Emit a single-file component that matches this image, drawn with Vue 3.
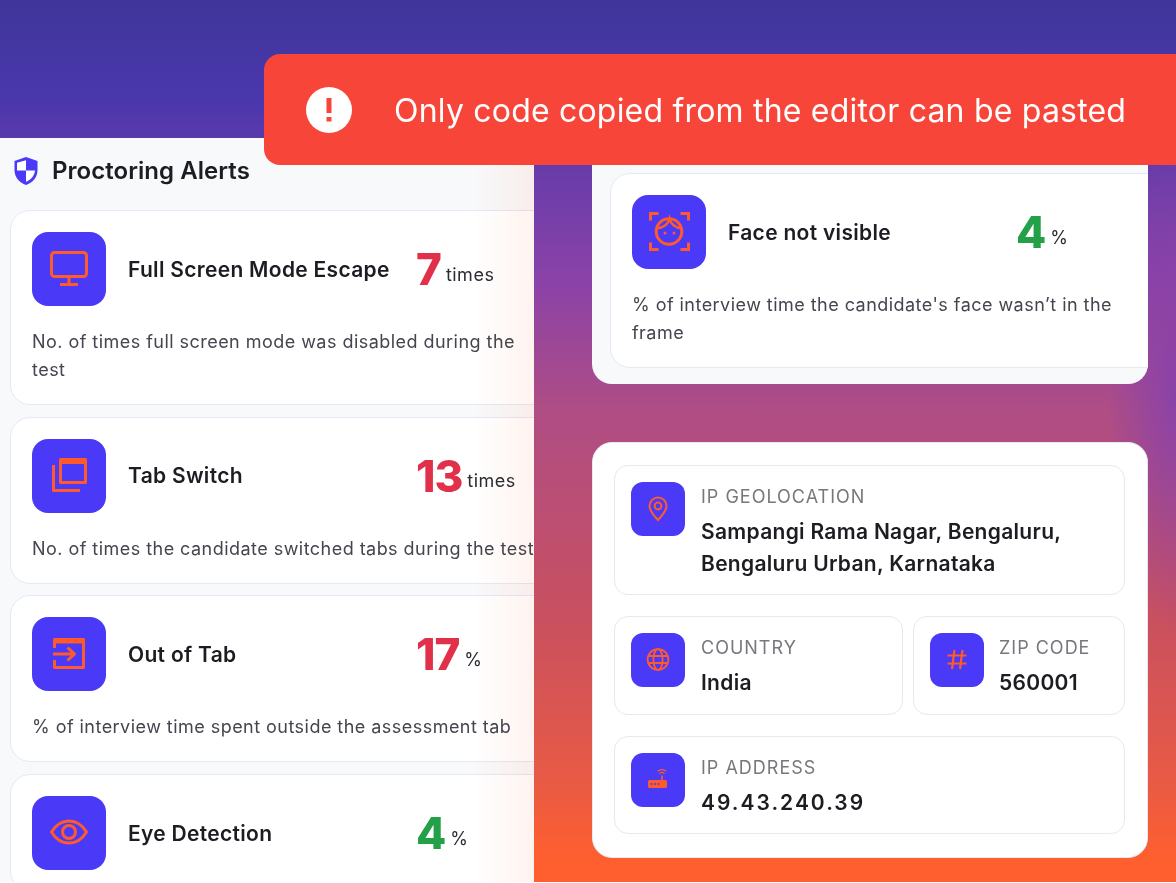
<template>
  <div class="screen">
    <div class="left-panel">
      <div class="panel-head">
        <svg class="shield" width="26" height="30" viewBox="0 0 26 30">
          <path d="M13 1 L24.5 5 V14 C24.5 21.5 19.5 26.5 13 29 C6.5 26.5 1.5 21.5 1.5 14 V5 Z" fill="#4a3af8" />
          <path d="M13 4.2 V14.5 H4 V6.8 Z" fill="#fff" />
          <path d="M13 14.5 H22 C21.4 20 17.8 23.6 13 25.8 Z" fill="#fff" />
        </svg>
        <h2>Proctoring Alerts</h2>
      </div>

      <div class="alert-list">
        <div class="alert-card" v-for="alert in alerts" :key="alert.title">
          <div class="alert-top">
            <div class="icon-box">
              <svg width="74" height="74" viewBox="0 0 74 74" fill="none" stroke="#ff5a2c" stroke-width="3" stroke-linejoin="round" v-html="alert.icon"></svg>
            </div>
            <div class="alert-title">{{ alert.title }}</div>
            <div class="metric">
              <span class="num" :class="alert.tone">{{ alert.value }}</span>
              <span class="unit">{{ alert.unit }}</span>
            </div>
          </div>
          <p class="alert-desc" v-if="alert.desc">{{ alert.desc }}</p>
        </div>
      </div>

      <div class="edge-fade"></div>
    </div>

    <div class="right-col">
      <div class="face-panel">
        <div class="alert-card">
          <div class="alert-top">
            <div class="icon-box">
              <svg width="74" height="74" viewBox="0 0 74 74" fill="none" stroke="#ff5a2c" stroke-width="3" v-html="faceIcon"></svg>
            </div>
            <div class="alert-title">Face not visible</div>
            <div class="metric">
              <span class="num good">4</span>
              <span class="unit">%</span>
            </div>
          </div>
          <p class="alert-desc">% of interview time the candidate's face wasn’t in the frame</p>
        </div>
      </div>

      <div class="info-panel">
        <div class="info-cell">
          <div class="info-icon">
            <svg width="54" height="54" viewBox="0 0 54 54" fill="none" stroke="#ff5a2c" stroke-width="2">
              <path d="M27 38 C24 34.5 18.5 29.5 18.5 24 A8.5 8.5 0 0 1 35.5 24 C35.5 29.5 30 34.5 27 38 Z" />
              <circle cx="27" cy="24" r="3.4" />
            </svg>
          </div>
          <div>
            <div class="info-label">IP Geolocation</div>
            <div class="info-value">Sampangi Rama Nagar, Bengaluru, Bengaluru Urban, Karnataka</div>
          </div>
        </div>

        <div class="info-row">
          <div class="info-cell grow">
            <div class="info-icon">
              <svg width="54" height="54" viewBox="0 0 54 54" fill="none" stroke="#ff5a2c" stroke-width="1.8">
                <circle cx="27" cy="26.5" r="10.4" />
                <ellipse cx="27" cy="26.5" rx="4.6" ry="10.4" />
                <path d="M17.6 23 H36.4 M17.6 30 H36.4" />
              </svg>
            </div>
            <div>
              <div class="info-label">Country</div>
              <div class="info-value">India</div>
            </div>
          </div>
          <div class="info-cell zip">
            <div class="info-icon">
              <svg width="54" height="54" viewBox="0 0 54 54" fill="none" stroke="#ff5a2c" stroke-width="2.2">
                <path d="M24.5 17 L22 36 M32.5 17 L30 36 M17.5 22.5 H36.5 M17.5 30.5 H36.5" />
              </svg>
            </div>
            <div>
              <div class="info-label">Zip Code</div>
              <div class="info-value">560001</div>
            </div>
          </div>
        </div>

        <div class="info-cell">
          <div class="info-icon">
            <svg width="54" height="54" viewBox="0 0 54 54" fill="none" stroke="#ff5a2c" stroke-width="1.3">
              <rect x="17" y="27" width="19" height="8" rx="1.6" fill="#ff5a2c" stroke="none" />
              <path d="M31 27 V22.5" stroke-width="1.6" />
              <path d="M28.5 20.6 A3.6 3.6 0 0 1 33.5 20.6 M26.6 18.4 A6.4 6.4 0 0 1 35.4 18.4" />
              <circle cx="20.5" cy="31" r="1" fill="#4a3af8" stroke="none" />
              <circle cx="24" cy="31" r="1" fill="#4a3af8" stroke="none" />
              <circle cx="27.5" cy="31" r="1" fill="#4a3af8" stroke="none" />
            </svg>
          </div>
          <div>
            <div class="info-label">IP Address</div>
            <div class="info-value ip">49.43.240.39</div>
          </div>
        </div>
      </div>
    </div>

    <div class="toast">
      <svg class="toast-icon" width="46" height="46" viewBox="0 0 46 46">
        <circle cx="23" cy="23" r="23" fill="#fff" />
        <rect x="20.5" y="11" width="5" height="15" fill="#f74539" />
        <rect x="20.5" y="30" width="5" height="4.5" fill="#f74539" />
      </svg>
      <span>Only code copied from the editor can be pasted</span>
    </div>
  </div>
</template>

<script setup>
const alerts = [
  {
    title: 'Full Screen Mode Escape',
    value: 7,
    unit: 'times',
    tone: 'bad',
    desc: 'No. of times full screen mode was disabled during the test',
    icon: '<rect x="19.5" y="20.5" width="35" height="24" rx="3"/><path d="M37 45 V52 M28 52.5 H46"/>'
  },
  {
    title: 'Tab Switch',
    value: 13,
    unit: 'times',
    tone: 'bad',
    desc: 'No. of times the candidate switched tabs during the test',
    icon: '<path d="M28.5 24 V20.5 H53.5 V43.5 H28.5 Z"/><path d="M28 22.5 H54" stroke-width="5"/><path d="M21.5 26 V51.5 H48"/>'
  },
  {
    title: 'Out of Tab',
    value: 17,
    unit: '%',
    tone: 'bad',
    desc: '% of interview time spent outside the assessment tab',
    icon: '<path d="M22.5 31 V22.5 H51.5 V50.5 H22.5 V43"/><path d="M22 24 H52" stroke-width="5"/><path d="M21 37 H42 M35.5 30.5 L42.5 37 L35.5 43.5"/>'
  },
  {
    title: 'Eye Detection',
    value: 4,
    unit: '%',
    tone: 'good',
    desc: '',
    icon: '<path d="M19.5 36 C24 28.5 30 25 37 25 C44 25 50 28.5 54.5 36 C50 43.5 44 47 37 47 C30 47 24 43.5 19.5 36 Z"/><circle cx="37" cy="36" r="6.5"/>'
  }
]

const faceIcon = `<path d="M18.5 25.5 V18.5 H26.5 M48.5 18.5 H56.5 V25.5 M18.5 47.5 V54.5 H26.5 M48.5 54.5 H56.5 V47.5"/>
  <circle cx="37" cy="36.5" r="12.8"/>
  <path d="M25.5 33 C31 33 36 29.5 37.5 24 C39 29.5 44 33 49 33" stroke-width="2.6"/>
  <circle cx="33" cy="38" r="1.5" fill="#ff5a2c" stroke="none"/>
  <circle cx="42" cy="38" r="1.5" fill="#ff5a2c" stroke="none"/>`
</script>

<style>
html,
body {
  margin: 0;
  background: #fff;
}
</style>

<style scoped>
.screen {
  position: relative;
  width: 1176px;
  height: 882px;
  overflow: hidden;
  display: flex;
  font-family: Inter, "Noto Sans", sans-serif;
  color: #1c1d22;
  background:
    radial-gradient(ellipse 70px 240px at 100% 390px, #8a42a8 0%, rgba(138, 66, 168, 0) 100%),
    linear-gradient(180deg, #3f369a 0, #4a37ad 100px, #6c3da9 180px, #8a42a8 280px, #af4d85 410px, #c9505f 620px, #e85a45 780px, #ff5f2e 860px);
}

.left-panel {
  position: relative;
  box-sizing: border-box;
  flex: none;
  width: 534px;
  margin-top: 138px;
  padding: 0 0 0 10px;
  background: #f8f9fb;
  overflow: hidden;
}

.panel-head {
  box-sizing: border-box;
  display: flex;
  align-items: center;
  gap: 13px;
  height: 72px;
  padding: 0 0 6px 3px;
}

.shield {
  flex: none;
}

.panel-head h2 {
  margin: 0;
  font-size: 24px;
  line-height: 32px;
  letter-spacing: 0.05px;
  font-weight: 600;
}

.alert-list {
  display: flex;
  flex-direction: column;
  gap: 11.7px;
  width: 558px;
}

.alert-card {
  box-sizing: border-box;
  width: 558px;
  padding: 21px 21px 20px;
  background: #fff;
  border: 1px solid #e4e9f3;
  border-radius: 20px;
}

.alert-top {
  display: flex;
  align-items: center;
}

.icon-box {
  flex: none;
  width: 74px;
  height: 74px;
  border-radius: 16px;
  background: #4a3af8;
}

.alert-title {
  flex: none;
  width: 288px;
  box-sizing: border-box;
  padding-left: 22px;
  font-size: 21px;
  letter-spacing: 0.3px;
  font-weight: 600;
}

.metric {
  display: flex;
  align-items: center;
  gap: 5px;
  margin-left: 22px;
}

.num {
  font-size: 44px;
  line-height: 44px;
  letter-spacing: -1px;
  font-weight: 800;
}

.bad {
  color: #e0304a;
}

.good {
  color: #24a148;
}

.unit {
  margin-top: 10px;
  font-size: 18px;
  letter-spacing: 0.5px;
  color: #2b2c33;
}

.alert-desc {
  margin: 22px 0 0;
  font-size: 18px;
  line-height: 28px;
  letter-spacing: 0.46px;
  color: #44454f;
}

.edge-fade {
  position: absolute;
  top: 0;
  right: 0;
  bottom: 0;
  width: 60px;
  background: linear-gradient(90deg, #fff, #fff3ef);
  mix-blend-mode: multiply;
  pointer-events: none;
}

.right-col {
  display: flex;
  flex-direction: column;
  gap: 58px;
  flex: none;
  width: 556px;
  margin-left: 58px;
}

.face-panel {
  box-sizing: border-box;
  height: 246px;
  margin-top: 138px;
  padding: 35px 0 0 18px;
  background: #f8f9fb;
  border-radius: 0 0 20px 20px;
  overflow: hidden;
}

.face-panel .alert-card {
  height: 195px;
}

.face-panel .alert-desc {
  width: 500px;
}

.info-panel {
  box-sizing: border-box;
  display: flex;
  flex-direction: column;
  gap: 21px;
  height: 416px;
  padding: 22px 22px 21px 21px;
  background: #fff;
  border: 1px solid #e4e9f3;
  border-radius: 20px;
}

.info-row {
  display: flex;
  gap: 10px;
}

.info-cell {
  box-sizing: border-box;
  display: flex;
  gap: 16px;
  padding: 16px 16px 14.5px;
  border: 1.5px solid #e4e9f3;
  border-radius: 14px;
}

.info-icon {
  flex: none;
  width: 54px;
  height: 54px;
  border-radius: 12px;
  background: #4a3af8;
}

.grow {
  flex: 1;
  height: 99px;
}

.zip {
  flex: none;
  width: 212px;
  height: 99px;
  gap: 15px;
}

.info-label {
  margin-top: 1px;
  font-size: 18px;
  line-height: 28px;
  letter-spacing: 1px;
  text-transform: uppercase;
  color: #77787e;
}

.info-value {
  margin-top: 4.5px;
  font-size: 21px;
  line-height: 32px;
  letter-spacing: 0.3px;
  font-weight: 600;
  color: #1c1d22;
}

.ip {
  letter-spacing: 2px;
}

.toast {
  position: absolute;
  top: 54px;
  left: 264px;
  right: 0;
  height: 111px;
  display: flex;
  align-items: center;
  gap: 42px;
  padding-left: 42px;
  background: #f74539;
  border-radius: 16px 0 0 16px;
  color: #fff;
  font-size: 32px;
  letter-spacing: 0.2px;
}

.toast span {
  margin-top: 1px;
}

.toast-icon {
  flex: none;
}
</style>
